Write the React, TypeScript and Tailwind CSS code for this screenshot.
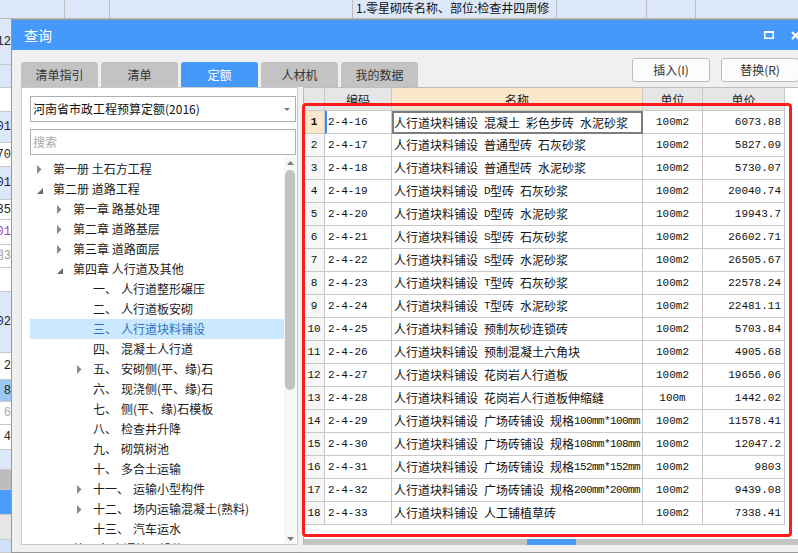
import React from "react";

const cjk = "font-['Noto_Sans_CJK_SC',sans-serif]";
const mono = "font-['Liberation_Mono',monospace]";

const sideCells = [
  { h: 46, bg: "bg-[#dce8fa]", t: "12", c: "text-[#222]" },
  { h: 23, bg: "bg-[#dce8fa]", t: "", c: "" },
  { h: 24, bg: "bg-white", t: "", c: "" },
  { h: 31, bg: "bg-[#dce8fa]", t: "01", c: "text-[#222]" },
  { h: 24, bg: "bg-white", t: "70", c: "text-[#222]" },
  { h: 33, bg: "bg-[#dce8fa]", t: "01", c: "text-[#222]" },
  { h: 20, bg: "bg-white", t: "35", c: "text-[#222]" },
  { h: 25, bg: "bg-white", t: "01", c: "text-[#a040c0]" },
  { h: 23, bg: "bg-white", t: "用3", c: "text-[#999]" },
  { h: 24, bg: "bg-white", t: "", c: "" },
  { h: 61, bg: "bg-[#dce8fa]", t: "02", c: "text-[#222]" },
  { h: 27, bg: "bg-white", t: "2", c: "text-[#222]" },
  { h: 22, bg: "bg-[#99c8f5]", t: "8", c: "text-[#222]" },
  { h: 23, bg: "bg-white", t: "6", c: "text-[#aaa]" },
  { h: 25, bg: "bg-white", t: "4", c: "text-[#222]" },
  { h: 20, bg: "bg-[#dce8fa]", t: "", c: "" },
  { h: 20, bg: "bg-[#bdbdbd]", t: "", c: "" },
  { h: 25, bg: "bg-[#4c9df7]", t: "", c: "" },
  { h: 25, bg: "bg-[#e6e6e6]", t: "", c: "" },
  { h: 13, bg: "bg-[#cfe1f8]", t: "", c: "" },
];

type Node = { level: number; arrow: "none" | "closed" | "open"; label?: string; text: string; selected?: boolean };

const tree: Node[] = [
  { level: 0, arrow: "closed", text: "第一册 土石方工程" },
  { level: 0, arrow: "open", text: "第二册 道路工程" },
  { level: 1, arrow: "closed", text: "第一章 路基处理" },
  { level: 1, arrow: "closed", text: "第二章 道路基层" },
  { level: 1, arrow: "closed", text: "第三章 道路面层" },
  { level: 1, arrow: "open", text: "第四章 人行道及其他" },
  { level: 2, arrow: "none", label: "一、", text: "人行道整形碾压" },
  { level: 2, arrow: "none", label: "二、", text: "人行道板安砌" },
  { level: 2, arrow: "none", label: "三、", text: "人行道块料铺设", selected: true },
  { level: 2, arrow: "none", label: "四、", text: "混凝土人行道" },
  { level: 2, arrow: "closed", label: "五、", text: "安砌侧(平、缘)石" },
  { level: 2, arrow: "none", label: "六、", text: "现浇侧(平、缘)石" },
  { level: 2, arrow: "none", label: "七、", text: "侧(平、缘)石模板" },
  { level: 2, arrow: "none", label: "八、", text: "检查井升降" },
  { level: 2, arrow: "none", label: "九、", text: "砌筑树池" },
  { level: 2, arrow: "none", label: "十、", text: "多合土运输" },
  { level: 2, arrow: "closed", label: "十一、", text: "运输小型构件" },
  { level: 2, arrow: "closed", label: "十二、", text: "场内运输混凝土(熟料)" },
  { level: 2, arrow: "none", label: "十三、", text: "汽车运水" },
  { level: 1, arrow: "closed", text: "第五章 交通管理设施" },
];

const rows: [string, string, string, string][] = [
  ["2-4-16", "人行道块料铺设 混凝土 彩色步砖 水泥砂浆", "100m2", "6073.88"],
  ["2-4-17", "人行道块料铺设 普通型砖 石灰砂浆", "100m2", "5827.09"],
  ["2-4-18", "人行道块料铺设 普通型砖 水泥砂浆", "100m2", "5730.07"],
  ["2-4-19", "人行道块料铺设 D型砖 石灰砂浆", "100m2", "20040.74"],
  ["2-4-20", "人行道块料铺设 D型砖 水泥砂浆", "100m2", "19943.7"],
  ["2-4-21", "人行道块料铺设 S型砖 石灰砂浆", "100m2", "26602.71"],
  ["2-4-22", "人行道块料铺设 S型砖 水泥砂浆", "100m2", "26505.67"],
  ["2-4-23", "人行道块料铺设 T型砖 石灰砂浆", "100m2", "22578.24"],
  ["2-4-24", "人行道块料铺设 T型砖 水泥砂浆", "100m2", "22481.11"],
  ["2-4-25", "人行道块料铺设 预制灰砂连锁砖", "100m2", "5703.84"],
  ["2-4-26", "人行道块料铺设 预制混凝土六角块", "100m2", "4905.68"],
  ["2-4-27", "人行道块料铺设 花岗岩人行道板", "100m2", "19656.06"],
  ["2-4-28", "人行道块料铺设 花岗岩人行道板伸缩缝", "100m", "1442.02"],
  ["2-4-29", "人行道块料铺设 广场砖铺设 规格100mm*100mm", "100m2", "11578.41"],
  ["2-4-30", "人行道块料铺设 广场砖铺设 规格108mm*108mm", "100m2", "12047.2"],
  ["2-4-31", "人行道块料铺设 广场砖铺设 规格152mm*152mm", "100m2", "9803"],
  ["2-4-32", "人行道块料铺设 广场砖铺设 规格200mm*200mm", "100m2", "9439.08"],
  ["2-4-33", "人行道块料铺设 人工铺植草砖", "100m2", "7338.41"],
];

const tabs = ["清单指引", "清单", "定额", "人材机", "我的数据"];

// latin runs (digits, spaces, letters) get a narrow mono face like the original half-width font
function NameText({ text }: { text: string }) {
  const parts = text.split(/([ -~]+)/).filter(Boolean);
  return (
    <>
      {parts.map((p, i) =>
        /^[ -~]+$/.test(p) ? (
          <span key={i} className={`${mono} text-[11px] tracking-[-0.6px] whitespace-pre`}>
            {p}
          </span>
        ) : (
          <span key={i}>{p}</span>
        )
      )}
    </>
  );
}

function Arrow({ kind }: { kind: Node["arrow"] }) {
  if (kind === "closed")
    return (
      <svg width="5" height="9" viewBox="0 0 5 9">
        <polygon points="0,0 4.5,4.5 0,9" fill="#8a8a8a" />
      </svg>
    );
  if (kind === "open")
    return (
      <svg width="6" height="6" viewBox="0 0 6 6" className="mt-[4px]">
        <polygon points="6,0 6,6 0,6" fill="#6a6a6a" />
      </svg>
    );
  return null;
}

export default function App() {
  return (
    <div className={`relative w-[798px] h-[553px] overflow-hidden bg-[#dce8fa] text-[12px] ${cjk}`}>
      {/* app behind the dialog */}
      <div className="flex h-[19px] border-b border-[#b8b8b8]">
        <div className="w-[65px] border-r border-[#bcbcbc]" />
        <div className="w-[45px] border-r border-[#bcbcbc]" />
        <div className="w-[243px] border-r border-[#bcbcbc]" />
        <div className="w-[204px] border-r border-[#bcbcbc] pl-[3px] leading-[16px] text-[#111] overflow-hidden whitespace-nowrap">
          1.零星砌砖名称、部位:检查井四周修
          <br />补
        </div>
        <div className="w-[90px] border-r border-[#bcbcbc]" />
        <div className="w-[49px] border-r border-[#bcbcbc]" />
        <div className="flex-1" />
      </div>

      <div className="flex h-[534px]">
        <div className="w-[11px] shrink-0 flex flex-col">
          {sideCells.map((c, i) => (
            <div
              key={i}
              style={{ height: c.h }}
              className={`${c.bg} ${c.c} border-b border-[#c8c8c8] flex items-center justify-end overflow-hidden whitespace-nowrap ${mono} text-[12px]`}
            >
              {c.t}
            </div>
          ))}
        </div>

        {/* dialog */}
        <div className="w-[799px] shrink-0 flex flex-col border border-[#9a9a9a] bg-[#f0f0f0]">
          <div className="h-[30px] bg-[#4599fb] flex items-center justify-between pl-[12px] pr-[9px]">
            <span className="text-white text-[14px]">查询</span>
            <div className="flex items-center gap-[17px]">
              <svg width="10" height="8" viewBox="0 0 10 8">
                <rect x="0.75" y="1" width="8.5" height="6.25" fill="none" stroke="#fff" strokeWidth="1.5" />
                <rect x="0" y="0" width="10" height="2" fill="#fff" />
              </svg>
              <svg width="9" height="9" viewBox="0 0 9 9">
                <path d="M1 1 L8 8 M8 1 L1 8" stroke="#fff" strokeWidth="2" />
              </svg>
            </div>
          </div>

          <div className="flex-1 flex flex-col pl-[9px] pr-[10px] pt-[8px]">
            <div className="h-[29px] flex justify-between">
              <div className="flex gap-[3px] items-end">
                {tabs.map((t) => (
                  <div
                    key={t}
                    className={`w-[77px] h-[25px] rounded-t-[3px] flex items-center justify-center text-[12px] ${
                      t === "定额" ? "bg-[#4599fb] text-white" : "bg-[#c3c3c3] text-[#333]"
                    }`}
                  >
                    {t}
                  </div>
                ))}
              </div>
              <div className="flex gap-[11px] items-start">
                <button className="w-[78px] h-[24px] bg-[#fcfcfc] border border-[#bdbdbd] rounded-[3px] text-[12px] text-[#333]">
                  插入(I)
                </button>
                <button className="w-[78px] h-[24px] bg-[#fcfcfc] border border-[#bdbdbd] rounded-[3px] text-[12px] text-[#333]">
                  替换(R)
                </button>
              </div>
            </div>

            <div className="h-[458px] flex gap-[5px]">
              {/* left panel */}
              <div className="w-[277px] shrink-0 bg-white border border-[#c9c9c9] pl-[8px] pr-[1px] pt-[8px] flex flex-col">
                <div className="w-[266px] h-[26px] border border-[#b0b0b0] flex items-center justify-between pl-[2px] pr-[5px] text-[#111]">
                  <span>河南省市政工程预算定额(2016)</span>
                  <svg width="6" height="3" viewBox="0 0 6 3">
                    <polygon points="0,0 6,0 3,3" fill="#777" />
                  </svg>
                </div>
                <div className="w-[266px] h-[26px] mt-[7px] border border-[#b0b0b0] flex items-center pl-[2px] text-[#a8a8a8]">
                  搜索
                </div>
                <div className="mt-[3px] flex-1 flex overflow-hidden">
                  <div className="w-[254px] pt-[1px] overflow-hidden">
                    {tree.map((n, i) => (
                      <div
                        key={i}
                        style={{ paddingLeft: 7 + n.level * 20 }}
                        className={`h-[20px] flex items-center whitespace-nowrap ${
                          n.selected ? "bg-[#cce8ff] text-[#2d6fc2]" : "text-[#1c1c1c]"
                        }`}
                      >
                        <div className="w-[16px] h-[20px] flex items-center">
                          <Arrow kind={n.arrow} />
                        </div>
                        {n.label && <span>{n.label}</span>}
                        <span className={n.label ? "ml-[4px]" : ""}>{n.text}</span>
                      </div>
                    ))}
                  </div>
                  <div className="w-[12px] flex flex-col items-center bg-[#f7f7f7]">
                    <svg width="7" height="4" viewBox="0 0 7 4" className="mt-[3px]">
                      <polygon points="0,4 7,4 3.5,0" fill="#7a7a7a" />
                    </svg>
                    <div className="mt-[5px] w-[10px] h-[220px] rounded-full bg-[#c2c2c2]" />
                    <div className="flex-1" />
                    <svg width="7" height="4" viewBox="0 0 7 4" className="mb-[3px]">
                      <polygon points="0,0 7,0 3.5,4" fill="#7a7a7a" />
                    </svg>
                  </div>
                </div>
              </div>

              {/* right panel: table */}
              <div className="flex-1 bg-white border-l border-t border-[#bdbdbd] flex flex-col">
                <div className="flex h-[23px] text-[#222]">
                  <div className="w-[21px] border-r border-b border-[#c8c8c8] bg-[#e6e6e6]" />
                  <div className="w-[67px] border-r border-b border-[#c8c8c8] bg-[#e6e6e6] flex items-center justify-center pt-[2px]">编码</div>
                  <div className="w-[251px] border-r border-b border-[#c8c8c8] bg-[#fde7cb] flex items-center justify-center pt-[2px]">名称</div>
                  <div className="w-[60px] border-r border-b border-[#c8c8c8] bg-[#e6e6e6] flex items-center justify-center pt-[2px]">单位</div>
                  <div className="w-[82px] border-r border-b border-[#c8c8c8] bg-[#e6e6e6] flex items-center justify-center pt-[2px]">单价</div>
                </div>
                {rows.map((r, i) => (
                  <div key={r[0]} className="flex h-[23px] text-[#111]">
                    <div
                      className={`w-[21px] border-r border-b border-[#c8c8c8] flex items-center justify-center ${mono} text-[11px] ${
                        i === 0 ? "bg-[#fde7cb] font-bold" : "bg-[#f7f7f7]"
                      }`}
                    >
                      {i + 1}
                    </div>
                    <div
                      className={`w-[67px] border-r border-b border-[#c8c8c8] flex items-center ${mono} text-[11px] ${
                        i === 0 ? "border-l-2 border-l-[#3b8cf0] pl-[1px]" : "pl-[3px]"
                      }`}
                    >
                      {r[0]}
                    </div>
                    <div
                      className={`w-[251px] flex items-center whitespace-nowrap overflow-hidden ${
                        i === 0 ? "border-2 border-[#7d7d7d]" : "border-r border-b border-[#c8c8c8] pl-[2px]"
                      }`}
                    >
                      <NameText text={r[1]} />
                    </div>
                    <div className={`w-[60px] border-r border-b border-[#c8c8c8] flex items-center justify-center ${mono} text-[11px]`}>
                      {r[2]}
                    </div>
                    <div className={`w-[82px] border-r border-b border-[#c8c8c8] flex items-center justify-end pr-[3px] ${mono} text-[11px]`}>
                      {r[3]}
                    </div>
                  </div>
                ))}
                <div className="flex-1" />
                <div className="h-[6px] bg-[#c4c4c4] flex">
                  <div className="ml-[223px] w-[49px] bg-[#4a9af7]" />
                </div>
              </div>
            </div>
          </div>
        </div>
      </div>

      {/* red annotation box */}
      <div className="absolute left-[302px] top-[103px] w-[490px] h-[434px] border-[3px] border-[#ff1c1c] rounded-[4px] pointer-events-none" />
    </div>
  );
}
